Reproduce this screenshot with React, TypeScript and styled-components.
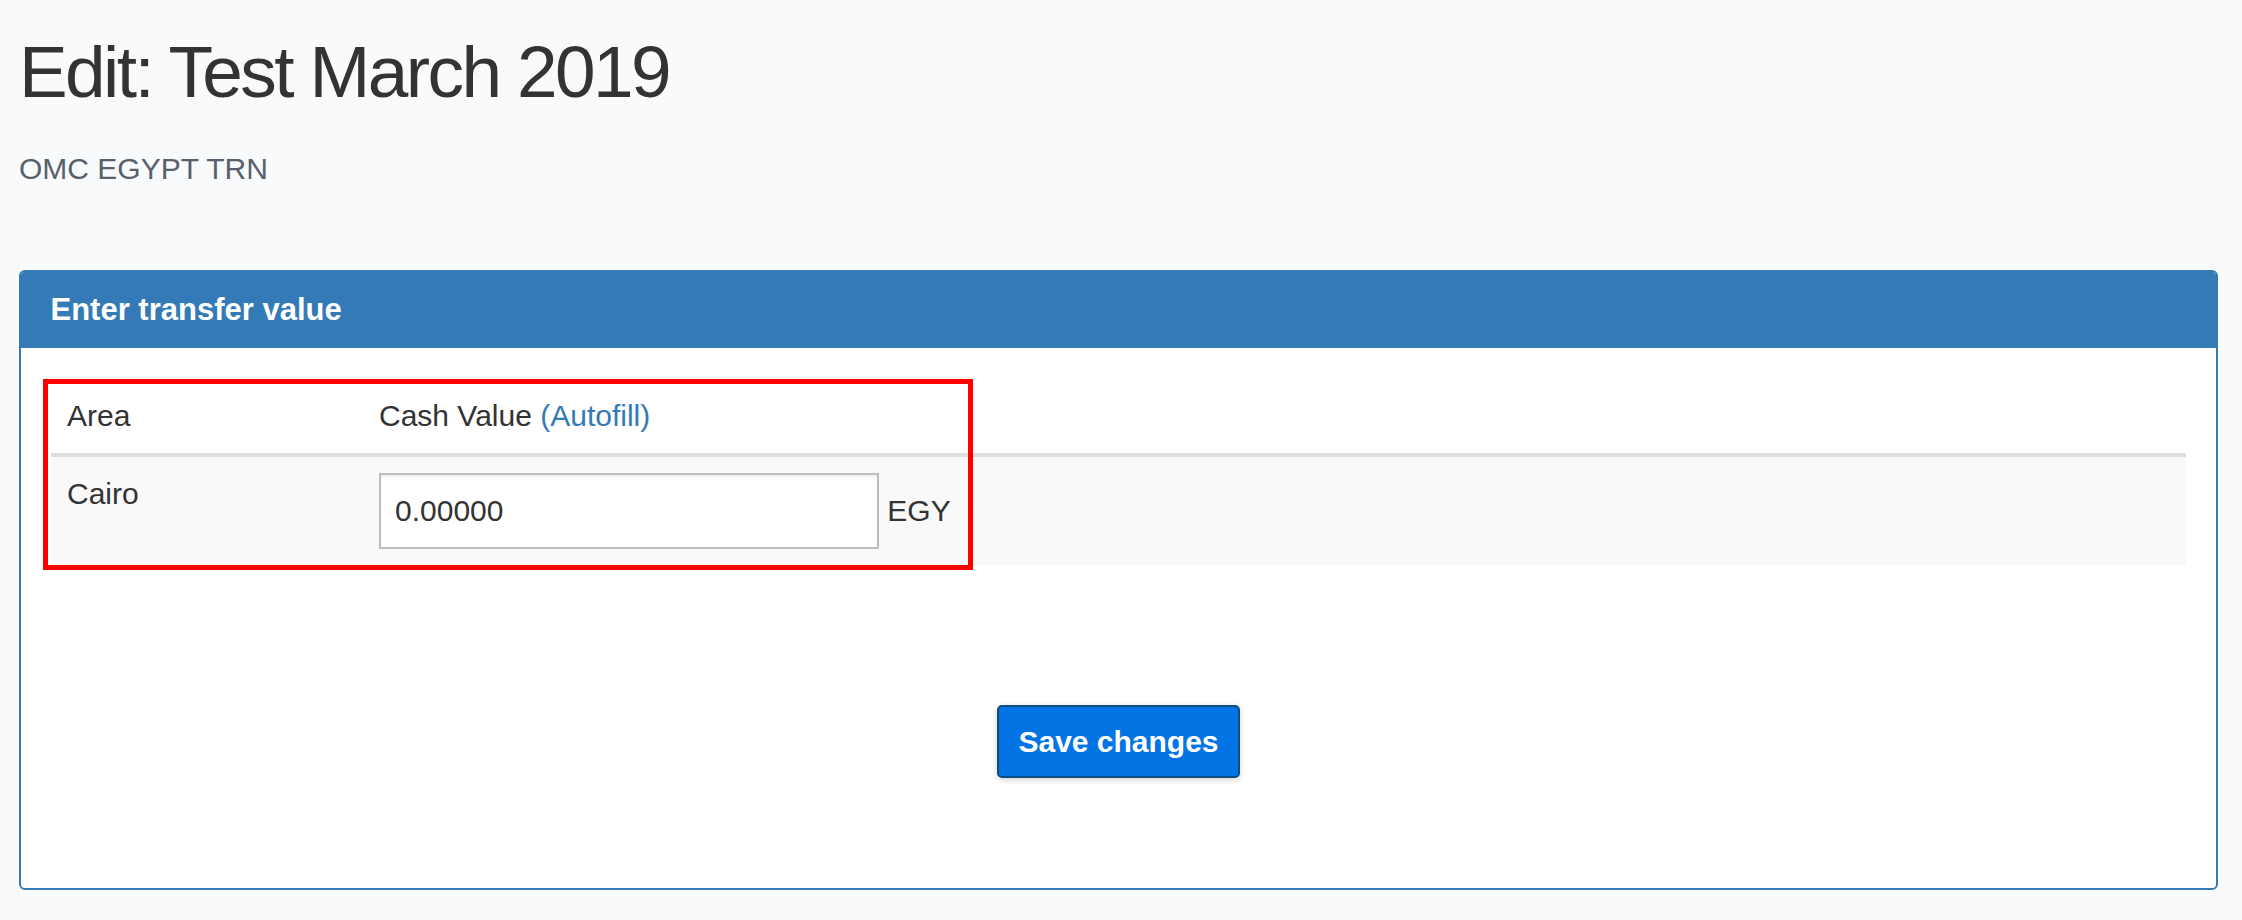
import React from "react";
import styled, { createGlobalStyle } from "styled-components";

const GlobalStyle = createGlobalStyle`
  html, body {
    margin: 0;
    padding: 0;
    background: #f9fafc;
  }
  body {
    font-family: "Liberation Sans", Arial, sans-serif;
    color: #333333;
  }
  * { box-sizing: border-box; }
`;

const Page = styled.div`
  padding: 32px 24px 20px 19px;
`;

const Title = styled.h1`
  margin: 0;
  font-family: "Liberation Sans", Arial, sans-serif;
  font-weight: 400;
  font-size: 73px;
  line-height: 79.2px;
  letter-spacing: -2.6px;
  color: #333333;
`;

const Subtitle = styled.p`
  margin: 37px 0 0;
  font-size: 30px;
  line-height: 42px;
  color: #58616b;
`;

const Panel = styled.section`
  margin-top: 79.5px;
  border: 2px solid #337ab7;
  border-radius: 6px;
  background: #ffffff;
  overflow: hidden;
`;

const PanelHeading = styled.header`
  height: 76px;
  display: flex;
  align-items: center;
  padding: 0 29.5px;
  background: #337ab7;
  color: #ffffff;
  font-weight: 700;
  font-size: 31px;
  line-height: 1;
`;

const PanelBody = styled.div`
  padding: 31px 30px 110px;
  display: flex;
  flex-direction: column;
`;

const TableWrap = styled.div`
  position: relative;
`;

const Table = styled.table`
  width: 100%;
  border-collapse: collapse;
  border-spacing: 0;
  table-layout: fixed;
  font-size: 30px;
  line-height: 42px;
  color: #333333;
`;

const HeadCell = styled.th`
  text-align: left;
  font-weight: 400;
  padding: 16px;
  vertical-align: bottom;
  border-bottom: 4px solid #dddddd;
`;

const BodyRow = styled.tr<{ $striped?: boolean }>`
  background: ${(p) => (p.$striped ? "#f9f9f9" : "#ffffff")};
`;

const Cell = styled.td`
  padding: 16px;
  vertical-align: top;
  white-space: nowrap;
`;

const Link = styled.a`
  color: #337ab7;
  text-decoration: none;
`;

const ValueInput = styled.input`
  display: inline-block;
  width: 500px;
  height: 76px;
  padding: 0 14px;
  border: 2px solid #bdbdbd;
  border-radius: 0;
  background: #ffffff;
  color: #333333;
  font-family: "Liberation Sans", Arial, sans-serif;
  font-size: 30px;
  box-shadow: inset 0 2px 2px rgba(0, 0, 0, 0.06);
  outline: none;
  vertical-align: baseline;
`;

const Highlight = styled.div`
  position: absolute;
  left: -8px;
  top: 0;
  width: 930px;
  height: 191px;
  border: 5px solid #ff0000;
  pointer-events: none;
`;

const Actions = styled.div`
  margin-top: 140.75px;
  display: flex;
  justify-content: center;
`;

const SaveButton = styled.button`
  height: 73px;
  padding: 0 19.5px;
  background: #0374e4;
  color: #ffffff;
  border: 2px solid #0f4c7e;
  border-radius: 5px;
  box-shadow: 0 2px 6px rgba(0, 0, 0, 0.18);
  font-family: "Liberation Sans", Arial, sans-serif;
  font-weight: 700;
  font-size: 30px;
  line-height: 1;
  cursor: pointer;
`;

export default function App() {
  return (
    <>
      <GlobalStyle />
      <Page>
        <Title>Edit: Test March 2019</Title>
        <Subtitle>OMC EGYPT TRN</Subtitle>
        <Panel>
          <PanelHeading>Enter transfer value</PanelHeading>
          <PanelBody>
            <TableWrap>
              <Table>
                <colgroup>
                  <col style={{ width: 312 }} />
                  <col />
                </colgroup>
                <thead>
                  <tr>
                    <HeadCell>Area</HeadCell>
                    <HeadCell>
                      Cash Value <Link href="#">(Autofill)</Link>
                    </HeadCell>
                  </tr>
                </thead>
                <tbody>
                  <BodyRow $striped>
                    <Cell>Cairo</Cell>
                    <Cell>
                      <ValueInput defaultValue="0.00000" /> EGY
                    </Cell>
                  </BodyRow>
                </tbody>
              </Table>
              <Highlight />
            </TableWrap>
            <Actions>
              <SaveButton type="button">Save changes</SaveButton>
            </Actions>
          </PanelBody>
        </Panel>
      </Page>
    </>
  );
}
